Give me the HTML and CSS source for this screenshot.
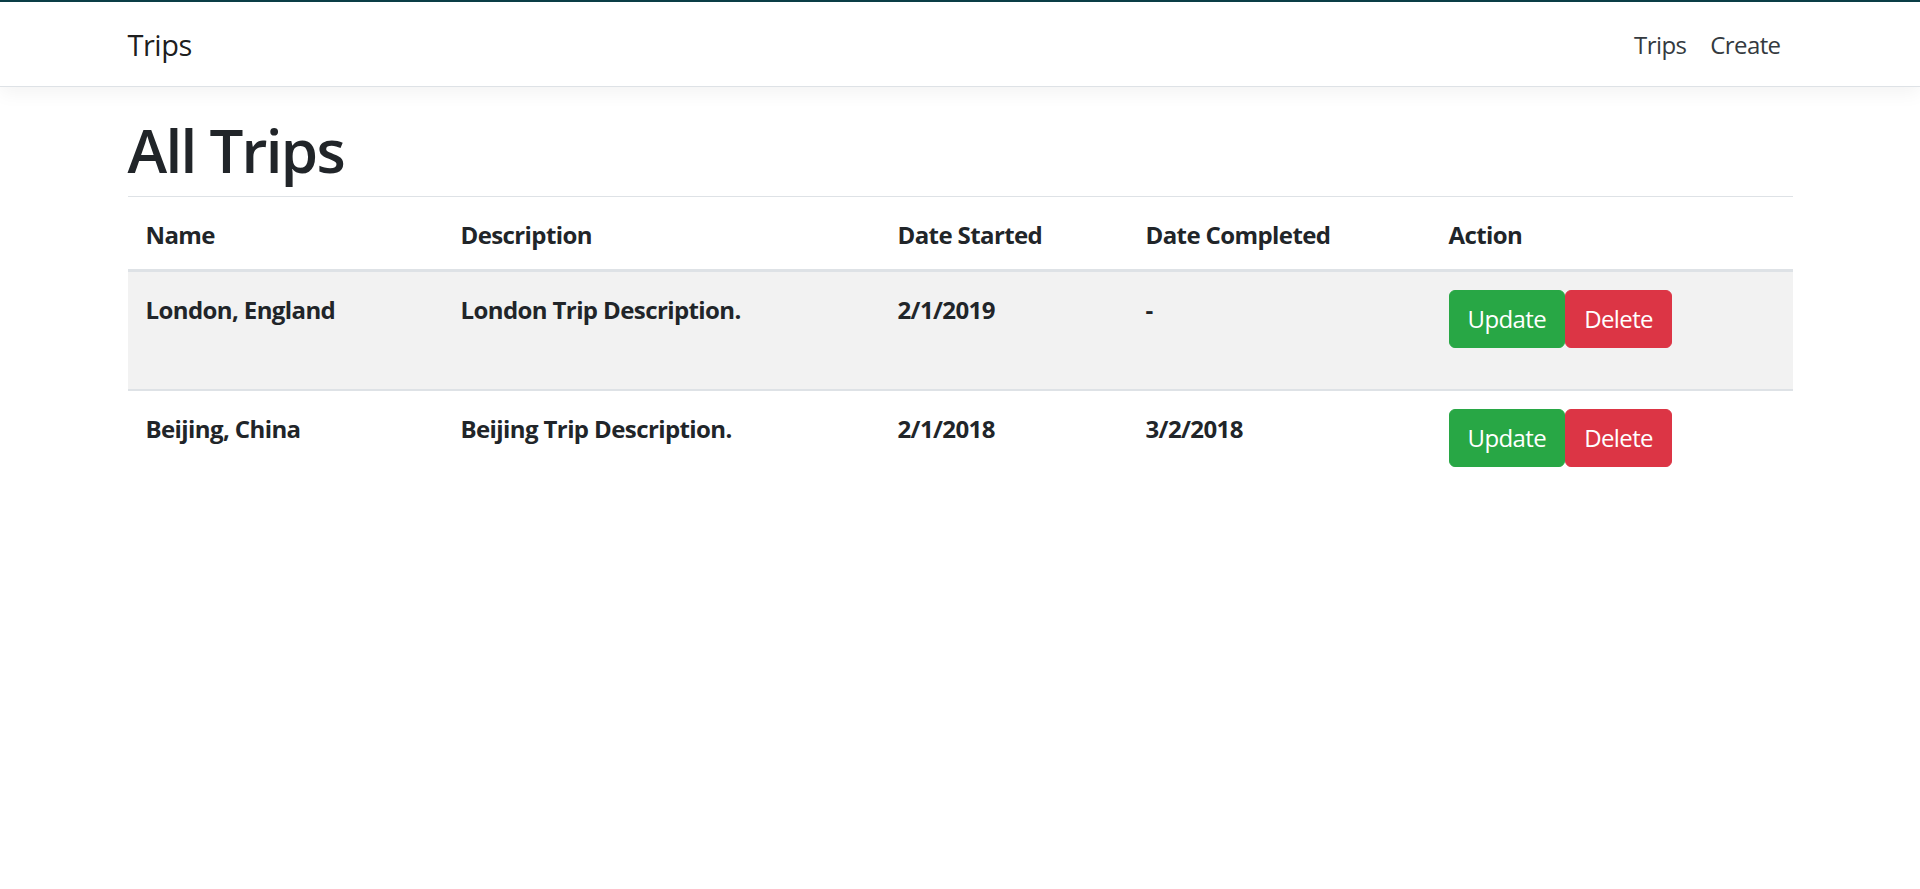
FILE: index.html
```html
<!DOCTYPE html>
<html lang="en">
<head>
<meta charset="utf-8">
<title>Trips</title>
<link rel="stylesheet" href="styles.css">
</head>
<body>
<div class="topline"></div>
<header>
  <nav class="navbar">
    <div class="container navbar-inner">
      <a class="brand" href="#">Trips</a>
      <ul class="nav">
        <li><a class="nav-link" href="#">Trips</a></li>
        <li><a class="nav-link" href="#">Create</a></li>
      </ul>
    </div>
  </nav>
</header>
<div class="container">
  <main class="main">
    <h1 class="title">All Trips</h1>
    <table class="table">
      <colgroup>
        <col class="col-name">
        <col class="col-desc">
        <col class="col-start">
        <col class="col-end">
        <col class="col-action">
      </colgroup>
      <thead>
        <tr>
          <th>Name</th>
          <th>Description</th>
          <th>Date Started</th>
          <th>Date Completed</th>
          <th>Action</th>
        </tr>
      </thead>
      <tbody>
        <tr class="odd">
          <td>London, England</td>
          <td>London Trip Description.</td>
          <td>2/1/2019</td>
          <td>-</td>
          <td class="action-cell">
            <div class="actions">
              <button class="btn btn-success">Update</button><button class="btn btn-danger">Delete</button>
            </div>
          </td>
        </tr>
        <tr>
          <td>Beijing, China</td>
          <td>Beijing Trip Description.</td>
          <td>2/1/2018</td>
          <td>3/2/2018</td>
          <td class="action-cell">
            <div class="actions">
              <button class="btn btn-success">Update</button><button class="btn btn-danger">Delete</button>
            </div>
          </td>
        </tr>
      </tbody>
    </table>
  </main>
</div>
</body>
</html>
```
FILE: styles.css
```css
html, body {
  margin: 0;
  padding: 0;
}
body {
  font-family: "Open Sans", "Noto Sans", sans-serif;
  font-size: 24px;
  line-height: 36px;
  color: #212529;
  background: #fff;
  letter-spacing: -0.6px;
}
.topline {
  height: 2px;
  background: #0b3f47;
}
.container {
  max-width: 1710px;
  margin: 0 auto;
  padding: 0 22.5px;
  box-sizing: border-box;
}
.navbar {
  background: #fff;
  border-bottom: 1px solid #dee2e6;
  box-shadow: 0 6px 18px rgba(0, 0, 0, 0.05);
  padding: 12px 0;
  margin-bottom: 24px;
}
.navbar-inner {
  display: flex;
  align-items: center;
  justify-content: space-between;
}
.brand {
  font-size: 29px;
  line-height: 45px;
  padding: 7.5px 0;
  color: rgba(0, 0, 0, 0.9);
  text-decoration: none;
  letter-spacing: -0.5px;
}
.nav {
  list-style: none;
  margin: 0;
  padding: 0;
  display: flex;
}
.nav-link {
  display: block;
  padding: 13px 12px 11px;
  color: #343a40;
  text-decoration: none;
}
.main {
  padding-bottom: 24px;
}
.title {
  font-size: 60px;
  line-height: 72px;
  font-weight: 600;
  margin: 0 0 10px;
  padding-top: 3px;
  letter-spacing: -1.7px;
}
.table {
  width: 100%;
  border-collapse: collapse;
  table-layout: fixed;
}
.col-name { width: 315px; }
.col-desc { width: 437px; }
.col-start { width: 248px; }
.col-end { width: 303px; }
.table th, .table td {
  text-align: left;
  vertical-align: top;
  padding: 20px 18px 16px;
  font-weight: 700;
}
.table td.action-cell {
  padding: 18px;
}
.table th {
  border-top: 1px solid #dee2e6;
  border-bottom: 3px solid #dee2e6;
}
.table td {
  border-top: 2px solid #dee2e6;
}
.table tr.odd td {
  background: #f2f2f2;
}
.actions {
  margin-bottom: 23px;
  display: flex;
}
.btn {
  font-family: inherit;
  font-size: 24px;
  line-height: 36px;
  letter-spacing: -0.6px;
  padding: 10px 18px;
  border: 1px solid transparent;
  border-radius: 6px;
  color: #fff;
  font-weight: 400;
  cursor: pointer;
  margin: 0;
}
.btn-success {
  background: #28a745;
  border-color: #28a745;
}
.btn-danger {
  background: #dc3545;
  border-color: #dc3545;
}
```
